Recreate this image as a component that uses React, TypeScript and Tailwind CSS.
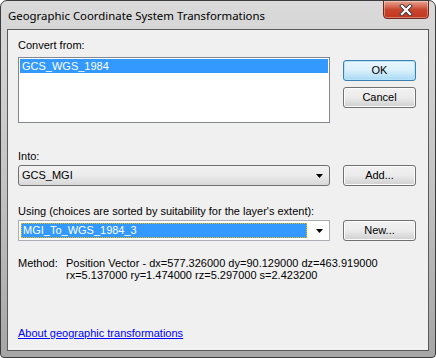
import React from 'react';

// Win7-style push button
function Btn({ label, isDefault = false }: { label: string; isDefault?: boolean }) {
  return (
    <div
      className={
        'w-[73px] h-[21px] rounded-[3px] border flex items-center justify-center text-[11px] text-black ' +
        (isDefault
          ? 'border-[#3c7fb1] bg-gradient-to-b from-[#eaf6fd] via-[#d9f0fc] to-[#a7d9f5] shadow-[inset_0_0_0_1px_#b6e3fa]'
          : 'border-[#707070] bg-gradient-to-b from-[#f2f2f2] via-[#ebebeb] to-[#cfcfcf] shadow-[inset_0_0_0_1px_#fcfcfc]')
      }
    >
      {label}
    </div>
  );
}

function Arrow() {
  return (
    <svg width="7" height="4" viewBox="0 0 7 4" className="shrink-0">
      <path d="M0 0H7L3.5 4Z" fill="#000" />
    </svg>
  );
}

export default function App() {
  return (
    <div
      className="w-[436px] h-[358px] flex flex-col rounded-t-[7px] rounded-b-[4px] border border-[#3c3c3c] bg-gradient-to-b from-[#dadada] via-[#c4c4c4] to-[#a6a6a6] overflow-hidden"
      style={{ fontFamily: '"Liberation Sans", Arial, sans-serif' }}
    >
      {/* title bar */}
      <div className="h-[28px] flex items-start shrink-0">
        <div
          className="pl-[7px] pt-[6px] text-[11.4px] text-black"
          style={{ fontFamily: '"Noto Sans", "Open Sans", sans-serif' }}
        >
          Geographic Coordinate System Transformations
        </div>
        <div className="ml-auto mr-[6px] -mt-px w-[46px] h-[19px] rounded-b-[4px] border border-[#6b2a1f] bg-gradient-to-b from-[#e8a493] via-[#c9462e] to-[#c2361c] flex items-center justify-center shadow-[inset_0_0_0_1px_rgba(255,255,255,0.35)]">
          <svg width="14" height="12" viewBox="0 0 14 12">
            <path d="M3 2L11 10M11 2L3 10" stroke="#3a3a3a" strokeWidth="4" strokeLinecap="square" />
            <path d="M3 2L11 10M11 2L3 10" stroke="#ffffff" strokeWidth="2.2" strokeLinecap="square" />
          </svg>
        </div>
      </div>

      {/* client area */}
      <div className="mx-[6px] mb-[6px] flex-1 border border-[#5a5a5a] bg-[#f0f0f0] px-[10px] pt-[9px] text-[11px] text-black">
        <div className="flex">
          <div className="w-[312px]">
            <div className="h-[13px] leading-[13px]">Convert from:</div>
            <div className="mt-[5px] h-[66px] border border-[#828790] bg-white p-px">
              <div className="h-[14px] leading-[14px] bg-[#3399ff] text-white pl-[2px]">GCS_WGS_1984</div>
            </div>
          </div>
          <div className="ml-[13px] pt-[21px] flex flex-col gap-[6px]">
            <Btn label="OK" isDefault />
            <Btn label="Cancel" />
          </div>
        </div>

        <div className="mt-[27px] h-[13px] leading-[13px]">Into:</div>
        <div className="mt-[2px] flex items-center">
          <div className="w-[312px] h-[21px] rounded-[3px] border border-[#707070] bg-gradient-to-b from-[#f2f2f2] via-[#ebebeb] to-[#d8d8d8] flex items-center pl-[3px] pr-[6px]">
            <span className="flex-1">GCS_MGI</span>
            <Arrow />
          </div>
          <div className="ml-[13px]">
            <Btn label="Add..." />
          </div>
        </div>

        <div className="mt-[19px] h-[13px] leading-[13px]">
          Using (choices are sorted by suitability for the layer's extent):
        </div>
        <div className="mt-[2px] flex items-center">
          <div className="w-[312px] h-[21px] border border-[#abadb3] bg-white flex items-center pl-[2px] pr-[6px]">
            <div className="w-[286px] h-[15px] leading-[13px] bg-[#3399ff] text-white pl-[1px] border border-dotted border-[#f5b800]">
              MGI_To_WGS_1984_3
            </div>
            <span className="flex-1" />
            <Arrow />
          </div>
          <div className="ml-[13px]">
            <Btn label="New..." />
          </div>
        </div>

        <div className="mt-[16px] flex leading-[12px]">
          <div className="w-[48px]">Method:</div>
          <div>
            <div>Position Vector - dx=577.326000 dy=90.129000 dz=463.919000</div>
            <div>rx=5.137000 ry=1.474000 rz=5.297000 s=2.423200</div>
          </div>
        </div>

        <div className="mt-[46px] text-[#0000ff] underline leading-[13px]">About geographic transformations</div>
      </div>
    </div>
  );
}
